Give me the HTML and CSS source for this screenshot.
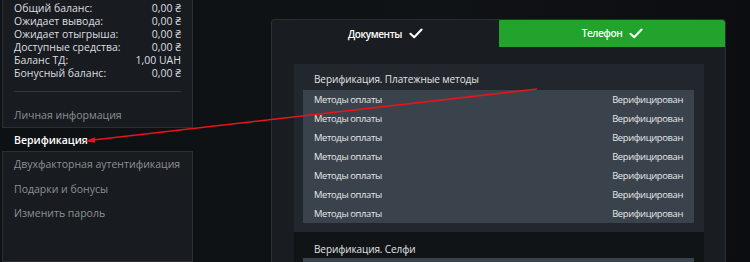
FILE: index.html
```html
<!DOCTYPE html>
<html lang="ru">
<head>
<meta charset="utf-8">
<link rel="stylesheet" href="styles.css">
</head>
<body>
<div class="page">
  <aside class="sidebar">
    <div class="box box-top">
      <div class="balances">
        <div class="bal"><span>Общий баланс:</span><span>0,00 ₴</span></div>
        <div class="bal"><span>Ожидает вывода:</span><span>0,00 ₴</span></div>
        <div class="bal"><span>Ожидает отыгрыша:</span><span>0,00 ₴</span></div>
        <div class="bal"><span>Доступные средства:</span><span>0,00 ₴</span></div>
        <div class="bal"><span>Баланс ТД:</span><span>1,00 UAH</span></div>
        <div class="bal"><span>Бонусный баланс:</span><span>0,00 ₴</span></div>
      </div>
      <div class="sep"></div>
      <div class="menu-item">Личная информация</div>
    </div>
    <div class="menu-item active">Верификация</div>
    <div class="box box-bottom">
      <div class="menu-item">Двухфакторная аутентификация</div>
      <div class="menu-item">Подарки и бонусы</div>
      <div class="menu-item">Изменить пароль</div>
    </div>
  </aside>
  <main class="main">
    <div class="card">
      <div class="tabs">
        <div class="tab">Документы <svg class="check" viewBox="0 0 14 11" width="14" height="11"><path d="M1.5 5.8 L5.2 9.2 L12.6 1.6" fill="none" stroke="#ffffff" stroke-width="2.1" stroke-linecap="round" stroke-linejoin="round"/></svg></div>
        <div class="tab tab-green">Телефон <svg class="check" viewBox="0 0 14 11" width="14" height="11"><path d="M1.5 5.8 L5.2 9.2 L12.6 1.6" fill="none" stroke="#ffffff" stroke-width="2.1" stroke-linecap="round" stroke-linejoin="round"/></svg></div>
      </div>
      <section class="sect">
        <div class="sect-title">Верификация. Платежные методы</div>
        <div class="table">
          <div class="row"><span>Методы оплаты</span><span>Верифицирован</span></div>
          <div class="row"><span>Методы оплаты</span><span>Верифицирован</span></div>
          <div class="row"><span>Методы оплаты</span><span>Верифицирован</span></div>
          <div class="row"><span>Методы оплаты</span><span>Верифицирован</span></div>
          <div class="row"><span>Методы оплаты</span><span>Верифицирован</span></div>
          <div class="row"><span>Методы оплаты</span><span>Верифицирован</span></div>
          <div class="row"><span>Методы оплаты</span><span>Верифицирован</span></div>
        </div>
      </section>
      <section class="sect sect-dark">
        <div class="sect-title">Верификация. Селфи</div>
        <div class="table">
          <div class="row"></div>
        </div>
      </section>
    </div>
  </main>
</div>
<svg class="arrow" width="750" height="262" viewBox="0 0 750 262">
  <line x1="537" y1="89" x2="93" y2="140" stroke="#e8141b" stroke-width="1.6"/>
  <polygon points="85,141.2 94.5,137.2 95.2,142.8" fill="#e8141b"/>
</svg>
</body>
</html>
```
FILE: styles.css
```css
* { box-sizing: border-box; }
html, body {
  margin: 0;
  padding: 0;
}
body {
  width: 750px;
  height: 262px;
  overflow: hidden;
  position: relative;
  background: linear-gradient(90deg, #0e1114 0%, #101316 60%, #0b0d10 100%);
  font-family: "Open Sans", "Noto Sans", sans-serif;
  font-size: 10.5px;
  color: #d9dbdd;
}
.page {
  display: flex;
  height: 262px;
  overflow: hidden;
}
.sidebar {
  width: 191px;
  margin-left: 2px;
  display: flex;
  flex-direction: column;
}
.box {
  background: #181b1f;
  border: 1px solid #2a2f34;
}
.box-top {
  border-top: none;
  height: 128px;
  padding: 2px 11px 0 11px;
}
.bal {
  display: flex;
  justify-content: space-between;
  height: 13px;
  line-height: 13px;
  color: #dcdee0;
}
.sep {
  height: 1px;
  background: #31363c;
  margin: 11px 0 0 0;
}
.menu-item {
  height: 24.5px;
  line-height: 24.5px;
  color: #8c9196;
  white-space: nowrap;
}
.box-top .menu-item {
  margin-top: 11px;
}
.active {
  color: #ffffff;
  font-weight: 600;
  padding-left: 12px;
  height: 23px;
  line-height: 24px;
}
.box-bottom {
  flex: 1;
  padding: 0 11px;
}
.main {
  flex: 1;
  padding-left: 78px;
  padding-top: 19px;
}
.card {
  width: 455px;
  height: 243px;
  overflow: hidden;
  background: #191d21;
  border: 1px solid #2a2f34;
  border-bottom: none;
  border-radius: 4px 4px 0 0;
}
.tabs {
  display: flex;
  height: 27px;
}
.tab {
  flex: 1;
  display: flex;
  align-items: center;
  justify-content: center;
  gap: 7px;
  color: #ffffff;
  font-weight: 600;
  font-size: 10px;
  letter-spacing: -0.4px;
}
.tab-green {
  background: #21a32c;
  border-radius: 3px 3px 0 0;
  margin: -1px -1px 0 0;
  height: 28px;
}
.check {
  display: block;
}
.sect {
  margin: 17px 21px 0 22px;
  background: #22272d;
  padding-bottom: 9px;
}
.sect-title {
  height: 26px;
  line-height: 30px;
  padding-left: 20px;
  color: #e2e4e6;
  font-size: 10px;
  letter-spacing: -0.1px;
}
.table {
  margin: 0 10px 0 9px;
  background: #3a434b;
}
.row {
  display: flex;
  justify-content: space-between;
  height: 19px;
  line-height: 20px;
  padding: 0 11px;
  color: #e6e8ea;
  font-size: 9.4px;
  letter-spacing: -0.35px;
}
.sect-dark {
  margin-top: 0;
  background: #111417;
}
.sect-dark .sect-title {
  padding-top: 8px;
  line-height: 18px;
}
.arrow {
  position: absolute;
  left: 0;
  top: 0;
  pointer-events: none;
}
```
